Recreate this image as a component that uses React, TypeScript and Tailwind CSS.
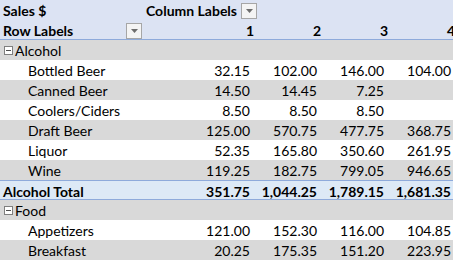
import React from "react";

type Row = { label: string; vals: string[]; kind: "group" | "item" | "total" };

const ROWS: Row[] = [
  { label: "Alcohol", vals: ["", "", "", ""], kind: "group" },
  { label: "Bottled Beer", vals: ["32.15", "102.00", "146.00", "104.00"], kind: "item" },
  { label: "Canned Beer", vals: ["14.50", "14.45", "7.25", ""], kind: "item" },
  { label: "Coolers/Ciders", vals: ["8.50", "8.50", "8.50", ""], kind: "item" },
  { label: "Draft Beer", vals: ["125.00", "570.75", "477.75", "368.75"], kind: "item" },
  { label: "Liquor", vals: ["52.35", "165.80", "350.60", "261.95"], kind: "item" },
  { label: "Wine", vals: ["119.25", "182.75", "799.05", "946.65"], kind: "item" },
  { label: "Alcohol Total", vals: ["351.75", "1,044.25", "1,789.15", "1,681.35"], kind: "total" },
  { label: "Food", vals: ["", "", "", ""], kind: "group" },
  { label: "Appetizers", vals: ["121.00", "152.30", "116.00", "104.85"], kind: "item" },
  { label: "Breakfast", vals: ["20.25", "175.35", "151.20", "223.95"], kind: "item" },
];

const COLS = "grid grid-cols-[143px_113px_67px_67px_67px]";

function DropBtn() {
  return (
    <span className="inline-flex h-[16px] w-[16px] items-center justify-center border border-[#a6a6a6] bg-[#f4f4f4]">
      <svg width="7" height="4" viewBox="0 0 7 4">
        <path d="M0 0h7L3.5 4z" fill="#6d6d6d" />
      </svg>
    </span>
  );
}

function Minus() {
  return (
    <span className="mr-[2px] inline-flex h-[9px] w-[9px] items-center justify-center border border-[#7f7f7f] bg-white">
      <span className="h-px w-[5px] bg-[#4d4d4d]" />
    </span>
  );
}

export default function App() {
  let stripe = 0;
  return (
    <div className="h-[260px] w-[453px] overflow-hidden bg-white text-[14px] text-black" style={{ fontFamily: "Lato, 'Liberation Sans', sans-serif" }}>
      <div className="w-[457px]">
        {/* header */}
        <div className="border-b border-[#8eaadb] bg-[#dce3f3] font-bold">
          <div className={`${COLS} h-[20px] items-center`}>
            <div className="pl-[3px]">Sales $</div>
            <div className="col-span-4 flex items-center gap-[4px] pl-[3px]">
              <span>Column Labels</span>
              <DropBtn />
            </div>
          </div>
          <div className={`${COLS} h-[19px] items-center`}>
            <div className="flex items-center justify-between pl-[3px] pr-[1px]">
              <span>Row Labels</span>
              <DropBtn />
            </div>
            {["1", "2", "3", "4"].map((n) => (
              <div key={n} className="pr-[2px] text-right">{n}</div>
            ))}
          </div>
        </div>

        {ROWS.map((r) => {
          if (r.kind === "total") {
            stripe = 0;
            return (
              <div key={r.label} className={`${COLS} h-[20px] items-center border-y border-[#8eaadb] bg-[#dde9f6] font-bold`}>
                <div className="pl-[3px]">{r.label}</div>
                {r.vals.map((v, i) => (
                  <div key={i} className="pr-[6px] text-right">{v}</div>
                ))}
              </div>
            );
          }
          const gray = r.kind === "group" || stripe % 2 === 1;
          stripe = r.kind === "group" ? 0 : stripe + 1;
          return (
            <div key={r.label} className={`${COLS} h-[20px] items-center ${gray ? "bg-[#d9d9d9]" : "bg-white"}`}>
              {r.kind === "group" ? (
                <div className="flex items-center pl-[4px]">
                  <Minus />
                  <span>{r.label}</span>
                </div>
              ) : (
                <div className="pl-[28px]">{r.label}</div>
              )}
              {r.vals.map((v, i) => (
                <div key={i} className="pr-[6px] text-right">{v}</div>
              ))}
            </div>
          );
        })}
      </div>
    </div>
  );
}
